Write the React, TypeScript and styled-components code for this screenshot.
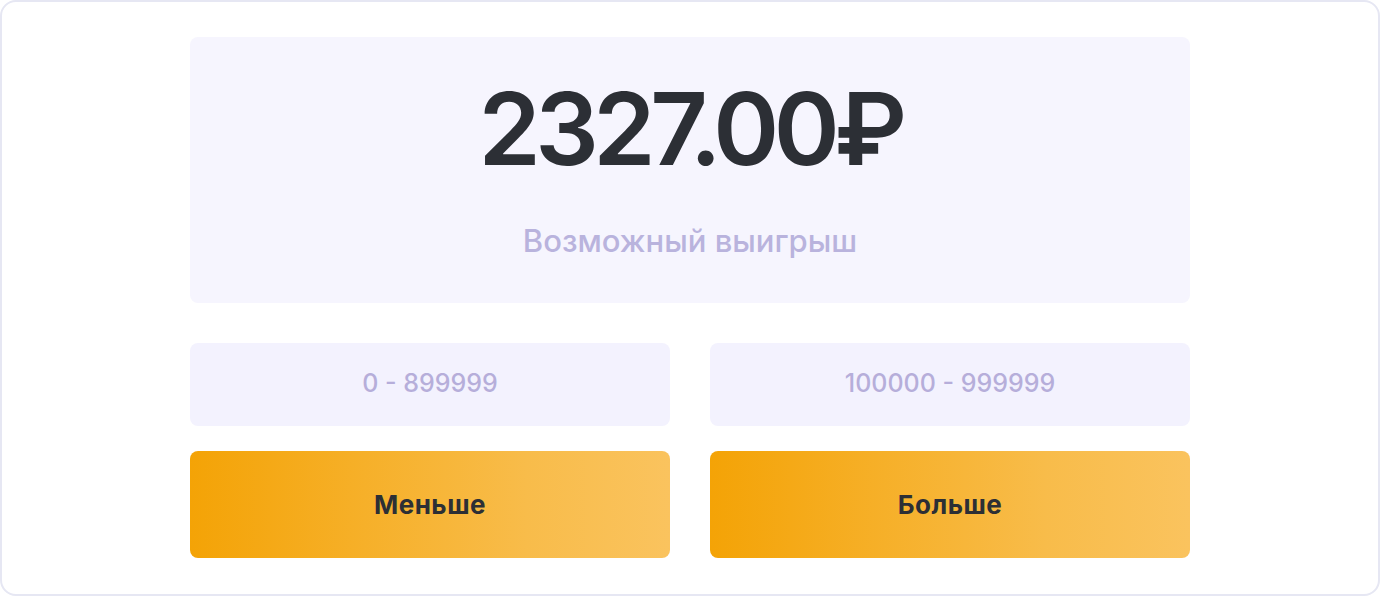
import React from "react";
import styled, { createGlobalStyle } from "styled-components";

const GlobalStyle = createGlobalStyle`
  html, body {
    margin: 0;
    padding: 0;
    background: #ffffff;
    font-family: "Inter", "Noto Sans", sans-serif;
  }
`;

const Card = styled.div`
  box-sizing: border-box;
  width: 1380px;
  height: 596px;
  border: 2px solid #e6e7f3;
  border-radius: 16px;
  background: #ffffff;
  display: flex;
  justify-content: center;
  padding-top: 35px;
`;

const Column = styled.div`
  width: 1000px;
  display: flex;
  flex-direction: column;
`;

const WinBox = styled.div`
  height: 266px;
  border-radius: 8px;
  background: #f6f5fe;
  display: flex;
  flex-direction: column;
  align-items: center;
`;

const Amount = styled.div`
  margin-top: 42px;
  font-size: 100px;
  line-height: 1;
  font-weight: 600;
  letter-spacing: -5.5px;
  color: #2c2f35;
`;

const Caption = styled.div`
  margin-top: 46px;
  font-size: 31px;
  line-height: 1;
  font-weight: 500;
  color: #b9b3dd;
`;

const Grid = styled.div`
  display: grid;
  grid-template-columns: 1fr 1fr;
  column-gap: 40px;
  row-gap: 25px;
  margin-top: 40px;
`;

const Range = styled.div`
  box-sizing: border-box;
  height: 83px;
  padding-bottom: 4px;
  border-radius: 8px;
  background: #f3f2fe;
  display: flex;
  align-items: center;
  justify-content: center;
  font-size: 25px;
  font-weight: 500;
  color: #b6aeda;
`;

const ActionButton = styled.button`
  height: 107px;
  border: none;
  border-radius: 8px;
  background: linear-gradient(90deg, #f4a306 0%, #f8bc4a 70%, #fac35e 100%);
  font-family: "Inter", "Noto Sans", sans-serif;
  font-size: 26px;
  font-weight: 700;
  letter-spacing: 0.5px;
  color: #2c2f35;
  cursor: pointer;
`;

export default function App() {
  const ranges = ["0 - 899999", "100000 - 999999"];
  const actions = ["Меньше", "Больше"];

  return (
    <>
      <GlobalStyle />
      <Card>
        <Column>
          <WinBox>
            <Amount>2327.00₽</Amount>
            <Caption>Возможный выигрыш</Caption>
          </WinBox>
          <Grid>
            {ranges.map((r) => (
              <Range key={r}>{r}</Range>
            ))}
            {actions.map((a) => (
              <ActionButton key={a}>{a}</ActionButton>
            ))}
          </Grid>
        </Column>
      </Card>
    </>
  );
}
